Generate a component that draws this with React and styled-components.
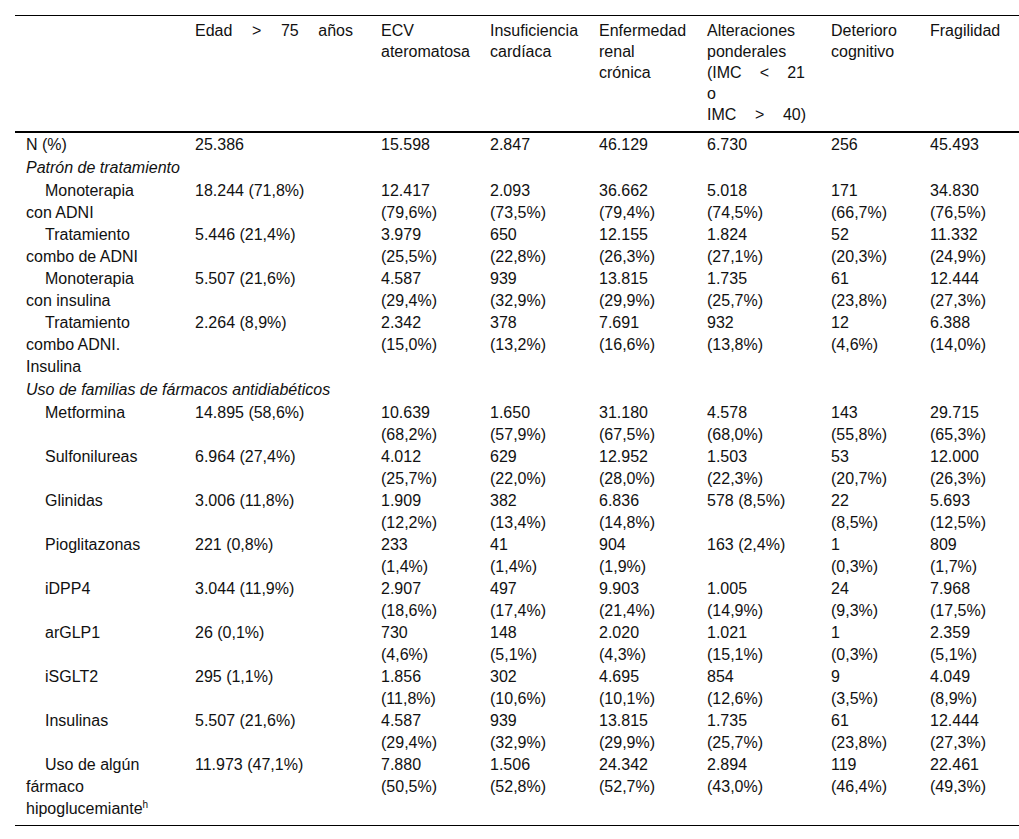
import React from "react";
import styled, { createGlobalStyle } from "styled-components";

const GlobalStyle = createGlobalStyle`
  body {
    margin: 0;
    background: #ffffff;
    color: #111111;
    font-family: "Liberation Sans", Arial, sans-serif;
    overflow: hidden;
  }
`;

const Page = styled.div`
  padding: 15px 0 0 15px;
`;

const Table = styled.table`
  width: 1004px;
  table-layout: fixed;
  border-collapse: collapse;
  border-top: 1px solid #000;
  border-bottom: 1px solid #000;
  font-size: 16px;
`;

const HeadCell = styled.th`
  font-weight: normal;
  text-align: left;
  vertical-align: top;
  line-height: 21px;
  padding: 4px 8px 6px 11px;
  border-bottom: 2px solid #000;
`;

const Line = styled.span`
  display: block;
  width: ${(p) => (p.$spread ? `${p.$spread}px` : "auto")};
  text-align: ${(p) => (p.$spread ? "justify" : "left")};
  text-align-last: ${(p) => (p.$spread ? "justify" : "auto")};
`;

const Cell = styled.td`
  vertical-align: top;
  line-height: 22px;
  padding: ${(p) => (p.$first ? "1px" : "0")} 8px ${(p) => (p.$last ? "5px" : "0")} 11px;
  text-indent: ${(p) => (p.$indent ? "19px" : "0")};
  white-space: nowrap;
`;

const SectionCell = styled.td`
  font-style: italic;
  line-height: 22px;
  padding: 1px 8px 1px 11px;
`;

const Sup = styled.sup`
  font-size: 10px;
  line-height: 0;
`;

const widths = [169, 186, 109, 109, 108, 124, 99, 100];

const header = [
  [],
  [{ t: "Edad > 75 años", w: 158 }],
  ["ECV", "ateromatosa"],
  ["Insuficiencia", "cardíaca"],
  ["Enfermedad", "renal", "crónica"],
  [
    "Alteraciones",
    "ponderales",
    { t: "(IMC < 21", w: 98 },
    "o",
    { t: "IMC > 40)", w: 99 },
  ],
  ["Deterioro", "cognitivo"],
  ["Fragilidad"],
];

const split = (v) => {
  const i = v.indexOf(" ");
  return [v.slice(0, i), v.slice(i + 1)];
};

// cells in columns 2..7 wrap into number / percentage, except where listed as single
const row = (label, first, rest, single = []) => ({
  label,
  cells: [
    [first],
    ...rest.map((v, i) => (single.includes(i) ? [v] : split(v))),
  ],
});

const treatment = [
  row(["Monoterapia", "con ADNI"], "18.244 (71,8%)", [
    "12.417 (79,6%)",
    "2.093 (73,5%)",
    "36.662 (79,4%)",
    "5.018 (74,5%)",
    "171 (66,7%)",
    "34.830 (76,5%)",
  ]),
  row(["Tratamiento", "combo de ADNI"], "5.446 (21,4%)", [
    "3.979 (25,5%)",
    "650 (22,8%)",
    "12.155 (26,3%)",
    "1.824 (27,1%)",
    "52 (20,3%)",
    "11.332 (24,9%)",
  ]),
  row(["Monoterapia", "con insulina"], "5.507 (21,6%)", [
    "4.587 (29,4%)",
    "939 (32,9%)",
    "13.815 (29,9%)",
    "1.735 (25,7%)",
    "61 (23,8%)",
    "12.444 (27,3%)",
  ]),
  row(["Tratamiento", "combo ADNI.", "Insulina"], "2.264 (8,9%)", [
    "2.342 (15,0%)",
    "378 (13,2%)",
    "7.691 (16,6%)",
    "932 (13,8%)",
    "12 (4,6%)",
    "6.388 (14,0%)",
  ]),
];

const families = [
  row(["Metformina"], "14.895 (58,6%)", [
    "10.639 (68,2%)",
    "1.650 (57,9%)",
    "31.180 (67,5%)",
    "4.578 (68,0%)",
    "143 (55,8%)",
    "29.715 (65,3%)",
  ]),
  row(["Sulfonilureas"], "6.964 (27,4%)", [
    "4.012 (25,7%)",
    "629 (22,0%)",
    "12.952 (28,0%)",
    "1.503 (22,3%)",
    "53 (20,7%)",
    "12.000 (26,3%)",
  ]),
  row(
    ["Glinidas"],
    "3.006 (11,8%)",
    [
      "1.909 (12,2%)",
      "382 (13,4%)",
      "6.836 (14,8%)",
      "578 (8,5%)",
      "22 (8,5%)",
      "5.693 (12,5%)",
    ],
    [3]
  ),
  row(
    ["Pioglitazonas"],
    "221 (0,8%)",
    [
      "233 (1,4%)",
      "41 (1,4%)",
      "904 (1,9%)",
      "163 (2,4%)",
      "1 (0,3%)",
      "809 (1,7%)",
    ],
    [3]
  ),
  row(["iDPP4"], "3.044 (11,9%)", [
    "2.907 (18,6%)",
    "497 (17,4%)",
    "9.903 (21,4%)",
    "1.005 (14,9%)",
    "24 (9,3%)",
    "7.968 (17,5%)",
  ]),
  row(["arGLP1"], "26 (0,1%)", [
    "730 (4,6%)",
    "148 (5,1%)",
    "2.020 (4,3%)",
    "1.021 (15,1%)",
    "1 (0,3%)",
    "2.359 (5,1%)",
  ]),
  row(["iSGLT2"], "295 (1,1%)", [
    "1.856 (11,8%)",
    "302 (10,6%)",
    "4.695 (10,1%)",
    "854 (12,6%)",
    "9 (3,5%)",
    "4.049 (8,9%)",
  ]),
  row(["Insulinas"], "5.507 (21,6%)", [
    "4.587 (29,4%)",
    "939 (32,9%)",
    "13.815 (29,9%)",
    "1.735 (25,7%)",
    "61 (23,8%)",
    "12.444 (27,3%)",
  ]),
  row(
    [
      "Uso de algún",
      "fármaco",
      <>
        hipoglucemiante<Sup>h</Sup>
      </>,
    ],
    "11.973 (47,1%)",
    [
      "7.880 (50,5%)",
      "1.506 (52,8%)",
      "24.342 (52,7%)",
      "2.894 (43,0%)",
      "119 (46,4%)",
      "22.461 (49,3%)",
    ]
  ),
];

const withBreaks = (lines) =>
  lines.map((l, i) => (
    <React.Fragment key={i}>
      {i > 0 && <br />}
      {l}
    </React.Fragment>
  ));

const DataRow = ({ data, last }) => (
  <tr>
    <Cell $indent $last={last}>
      {withBreaks(data.label)}
    </Cell>
    {data.cells.map((c, i) => (
      <Cell key={i} $last={last}>
        {withBreaks(c)}
      </Cell>
    ))}
  </tr>
);

const App = () => {
  return (
    <Page>
      <GlobalStyle />
      <Table>
        <colgroup>
          {widths.map((w, i) => (
            <col key={i} style={{ width: w }} />
          ))}
        </colgroup>
        <thead>
          <tr>
            {header.map((lines, i) => (
              <HeadCell key={i}>
                {lines.map((l, j) =>
                  typeof l === "string" ? (
                    <Line key={j}>{l}</Line>
                  ) : (
                    <Line key={j} $spread={l.w}>
                      {l.t}
                    </Line>
                  )
                )}
              </HeadCell>
            ))}
          </tr>
        </thead>
        <tbody>
          <tr>
            <Cell $first>N (%)</Cell>
            {["25.386", "15.598", "2.847", "46.129", "6.730", "256", "45.493"].map(
              (v, i) => (
                <Cell key={i} $first>
                  {v}
                </Cell>
              )
            )}
          </tr>
          <tr>
            <SectionCell colSpan={8}>Patrón de tratamiento</SectionCell>
          </tr>
          {treatment.map((r, i) => (
            <DataRow key={i} data={r} />
          ))}
          <tr>
            <SectionCell colSpan={8}>
              Uso de familias de fármacos antidiabéticos
            </SectionCell>
          </tr>
          {families.map((r, i) => (
            <DataRow key={i} data={r} last={i === families.length - 1} />
          ))}
        </tbody>
      </Table>
    </Page>
  );
};

export default App;
